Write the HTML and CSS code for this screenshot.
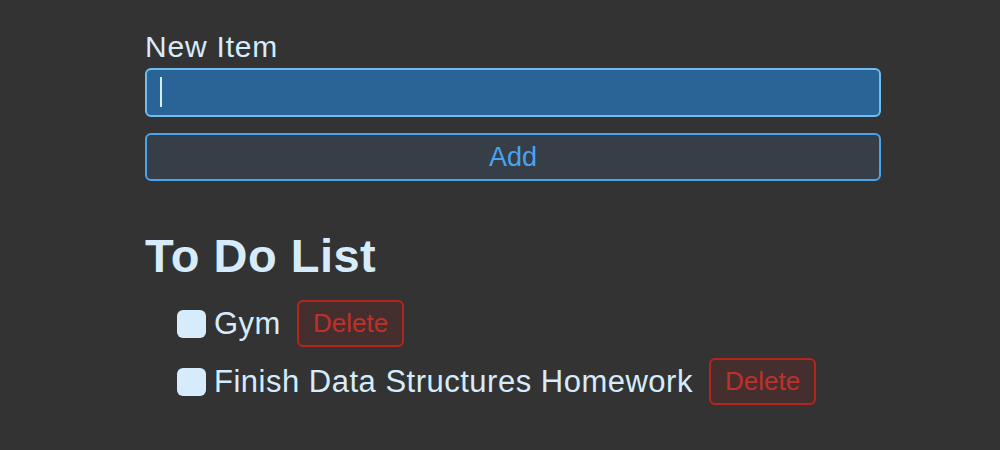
FILE: index.html
```html
<!DOCTYPE html>
<html>
<head>
<meta charset="utf-8">
<link rel="stylesheet" href="styles.css">
</head>
<body>
<div class="app">
  <label class="field-label" for="new-item">New Item</label>
  <div class="input-wrap">
    <input id="new-item" class="text-input" type="text">
    <span class="caret"></span>
  </div>
  <button class="add-btn">Add</button>
  <h1 class="title">To Do List</h1>
  <ul class="todo-list">
    <li class="todo-item">
      <input class="check" type="checkbox">
      <span class="todo-text">Gym</span>
      <button class="delete-btn">Delete</button>
    </li>
    <li class="todo-item">
      <input class="check" type="checkbox">
      <span class="todo-text">Finish Data Structures Homework</span>
      <button class="delete-btn">Delete</button>
    </li>
  </ul>
</div>
</body>
</html>
```
FILE: styles.css
```css
html, body {
  margin: 0;
  padding: 0;
  background: #333333;
}
body {
  font-family: "Liberation Sans", Arial, sans-serif;
  color: #d6ecfc;
}
.app {
  width: 736px;
  margin-left: 145px;
  padding-top: 30px;
  display: flex;
  flex-direction: column;
}
.field-label {
  display: block;
  font-size: 30px;
  letter-spacing: 0.8px;
  line-height: 34px;
  margin-bottom: 4px;
  color: #d6ecfc;
}
.input-wrap {
  position: relative;
  height: 49px;
}
.text-input {
  box-sizing: border-box;
  width: 100%;
  height: 49px;
  margin: 0;
  background: #2a6496;
  border: 2px solid #6fbcf0;
  border-radius: 6px;
  outline: none;
  padding: 0 13px;
  font-family: inherit;
  font-size: 26px;
  color: #d6ecfc;
  caret-color: transparent;
}
.caret {
  position: absolute;
  left: 15px;
  top: 9px;
  width: 2px;
  height: 30px;
  background: #d6ecfc;
}
.add-btn {
  box-sizing: border-box;
  margin: 16px 0 0 0;
  height: 48px;
  width: 100%;
  background: #363e48;
  border: 2px solid #4aa3ef;
  border-radius: 6px;
  color: #4aa3ef;
  font-family: inherit;
  font-size: 27px;
  padding: 0;
}
.title {
  margin: 48px 0 0 0;
  font-size: 47px;
  letter-spacing: 0.5px;
  line-height: 54px;
  font-weight: bold;
  color: #d6ecfc;
}
.todo-list {
  list-style: none;
  margin: 17px 0 0 0;
  padding: 0 0 0 32px;
  display: flex;
  flex-direction: column;
  gap: 11px;
}
.todo-item {
  display: flex;
  align-items: center;
}
.check {
  appearance: none;
  -webkit-appearance: none;
  margin: 0 8px 0 0;
  width: 29px;
  height: 28px;
  border-radius: 6px;
  background: #d6ecfc;
  border: none;
}
.todo-text {
  font-size: 31px;
  letter-spacing: 0.5px;
  line-height: 36px;
  color: #d6ecfc;
}
.delete-btn {
  box-sizing: border-box;
  margin-left: 16px;
  height: 47px;
  padding: 0 14px;
  background: #452f2e;
  border: 2px solid #b3261e;
  border-radius: 6px;
  color: #c0302a;
  font-family: inherit;
  font-size: 26px;
}
```
